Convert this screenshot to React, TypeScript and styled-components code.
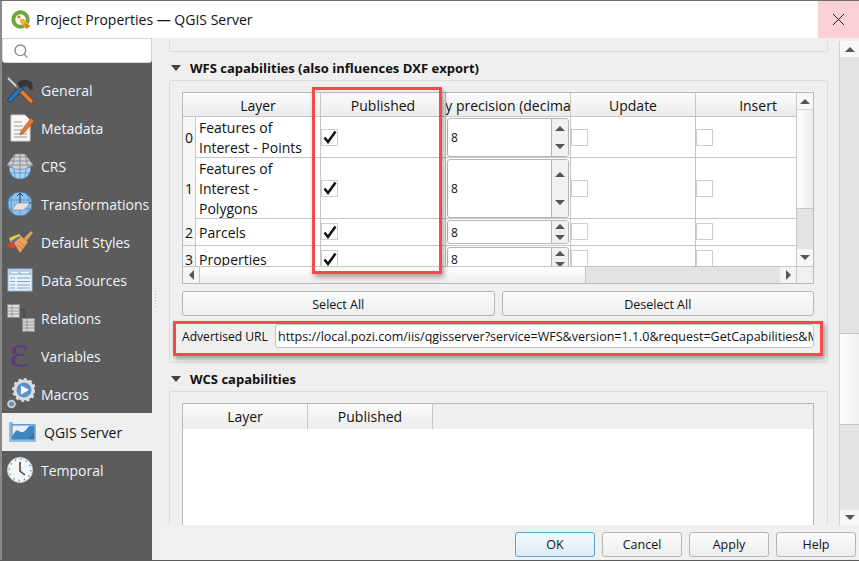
import React from 'react'
import styled, { createGlobalStyle } from 'styled-components'
import { Search } from 'lucide-react'

const GlobalStyle = createGlobalStyle`
  html, body {
    margin: 0;
    padding: 0;
    background: #efefef;
  }
  * {
    box-sizing: border-box;
  }
`

const Window = styled.div`
  position: relative;
  display: flex;
  flex-direction: column;
  width: 859px;
  height: 561px;
  overflow: hidden;
  padding-left: 2px;
  background: #efefef;
  border-top: 1px solid #6e6e6e;
  border-bottom: 1px solid #5c5c5c;
  font-family: 'Open Sans', 'Noto Sans', sans-serif;
  font-size: 14px;
  color: #111;
  &::before {
    content: '';
    position: absolute;
    left: 0;
    top: 0;
    bottom: 0;
    width: 2px;
    background: #8a8a8a;
  }
`

const TitleBar = styled.header`
  display: flex;
  align-items: center;
  flex: 0 0 37px;
  padding-left: 9px;
  background: #fff;
`

const TitleText = styled.span`
  margin-left: 5px;
  font-size: 14px;
  color: #111;
`

const CloseButton = styled.div`
  display: flex;
  align-items: center;
  justify-content: center;
  width: 41px;
  height: 37px;
  margin-left: auto;
  background: #fbd0d5;
`

const Body = styled.div`
  display: flex;
  flex: 1;
  min-height: 0;
`

const Sidebar = styled.nav`
  display: flex;
  flex-direction: column;
  flex: 0 0 150px;
  background: #5c5c5c;
`

const SearchBox = styled.div`
  display: flex;
  align-items: center;
  flex: 0 0 25px;
  margin-bottom: 8px;
  padding-left: 10px;
  background: #fff;
  border: 1px solid #d6d6d6;
  border-radius: 0 0 3px 3px;
`

const NavItem = styled.div<{ $active?: boolean }>`
  display: flex;
  align-items: center;
  gap: 8px;
  flex: 0 0 38px;
  padding-left: ${(p) => (p.$active ? '7px' : '5px')};
  background: ${(p) => (p.$active ? '#efefef' : 'transparent')};
  color: ${(p) => (p.$active ? '#111' : '#eef4fa')};
  font-size: 14px;
  white-space: nowrap;
`

const NavIcon = styled.span<{ $active?: boolean }>`
  display: flex;
  align-items: center;
  justify-content: flex-start;
  flex: 0 0 ${(p) => (p.$active ? '27px' : '26px')};
  min-width: 0;
  height: 32px;
  svg {
    flex: none;
  }
`

const Splitter = styled.div`
  display: flex;
  align-items: center;
  justify-content: center;
  flex: 0 0 6px;
`

const SplitterDots = styled.div`
  width: 1px;
  height: 16px;
  background: repeating-linear-gradient(to bottom, #b8b8b8 0 1px, transparent 1px 3px);
`

const RightColumn = styled.div`
  display: flex;
  flex-direction: column;
  flex: 1;
  min-width: 0;
`

const ScrollRow = styled.div`
  display: flex;
  flex: 1;
  min-height: 0;
`

const Content = styled.main`
  flex: 1;
  min-width: 0;
  overflow: hidden;
  padding: 3px 11px 0;
`

const StubGroup = styled.div`
  height: 11px;
  background: #eeeeee;
  border: 1px solid #dcdcdc;
  border-top: 0;
  border-radius: 0 0 2px 2px;
`

const SectionHeader = styled.div`
  display: flex;
  align-items: center;
  gap: 9px;
  height: 24px;
  margin-top: 4px;
  padding-left: 2px;
  font-size: 13px;
  font-weight: 700;
`

const Caret = styled.span`
  width: 0;
  height: 0;
  border-left: 5px solid transparent;
  border-right: 5px solid transparent;
  border-top: 6px solid #444;
`

const Group = styled.section<{ $height: number }>`
  height: ${(p) => p.$height}px;
  padding: 11px 13px 0 12px;
  border: 1px solid #dcdcdc;
  border-radius: 2px;
`

const TableFrame = styled.div`
  display: grid;
  grid-template-columns: 613px 17px;
  grid-template-rows: 173px 17px;
  width: 632px;
  height: 192px;
  background: #fff;
  border: 1px solid #b9b9b9;
`

const Viewport = styled.div`
  overflow: hidden;
`

const Row = styled.div<{ $height: number }>`
  display: grid;
  grid-template-columns: 13px 125px 125px 125px 125px 125px;
  height: ${(p) => p.$height}px;
  border-bottom: 1px solid #c6c6c6;
`

const HeaderCell = styled.div`
  display: flex;
  align-items: center;
  justify-content: center;
  padding-top: 2px;
  overflow: hidden;
  white-space: nowrap;
  font-size: 14px;
  background: linear-gradient(to bottom, #fbfbfb, #ececec);
  border-right: 1px solid #c6c6c6;
`

const WcsHeaderCell = styled(HeaderCell)`
  padding-top: 0;
`

const HeaderCorner = styled.div`
  background: linear-gradient(to bottom, #fbfbfb, #ececec);
`

const IndexCell = styled.div`
  display: flex;
  align-items: center;
  justify-content: center;
  font-size: 14px;
  background: #f6f6f6;
  border-right: 1px solid #c6c6c6;
`

const LayerCell = styled.div`
  display: flex;
  align-items: center;
  padding: 1px 3px 0;
  font-size: 14px;
  line-height: 20px;
  border-right: 1px solid #c6c6c6;
`

const CheckCell = styled.div`
  display: flex;
  align-items: center;
  padding-bottom: 1px;
  border-right: 1px solid #c6c6c6;
`

const CheckBox = styled.div`
  display: flex;
  align-items: center;
  justify-content: center;
  width: 17px;
  height: 17px;
  background: #fff;
  border: 1px solid #cdcdcd;
`

const SpinCell = styled.div`
  padding: 1px;
  border-right: 1px solid #c6c6c6;
`

const SpinBox = styled.div`
  display: flex;
  height: 100%;
  background: #fff;
  border: 1px solid #b4b4b4;
  border-radius: 3px;
  overflow: hidden;
`

const SpinValue = styled.div`
  display: flex;
  align-items: center;
  flex: 1;
  padding-left: 3px;
  font-size: 12px;
`

const SpinButtons = styled.div`
  display: flex;
  flex-direction: column;
  align-items: center;
  justify-content: space-around;
  flex: 0 0 17px;
  background: #f1f1f1;
  border-left: 1px solid #b4b4b4;
`

const Arrow = styled.span<{ $dir: 'up' | 'down' | 'left' | 'right' }>`
  width: 0;
  height: 0;
  ${(p) =>
    p.$dir === 'up'
      ? 'border-left: 5px solid transparent; border-right: 5px solid transparent; border-bottom: 5px solid #555;'
      : p.$dir === 'down'
        ? 'border-left: 5px solid transparent; border-right: 5px solid transparent; border-top: 5px solid #555;'
        : p.$dir === 'left'
          ? 'border-top: 5px solid transparent; border-bottom: 5px solid transparent; border-right: 5px solid #555;'
          : 'border-top: 5px solid transparent; border-bottom: 5px solid transparent; border-left: 5px solid #555;'}
`

const TableVScroll = styled.div`
  display: flex;
  flex-direction: column;
  background: #e3e3e3;
  border-left: 1px solid #c6c6c6;
`

const ScrollButton = styled.div<{ $size: number }>`
  display: flex;
  align-items: center;
  justify-content: center;
  flex: 0 0 ${(p) => p.$size}px;
  background: #f7f7f7;
`

const VThumb = styled.div<{ $height: number }>`
  flex: 0 0 ${(p) => p.$height}px;
  background: linear-gradient(to right, #fff, #ededed);
  border-top: 1px solid #d8d8d8;
  border-bottom: 1px solid #c6c6c6;
`

const Track = styled.div`
  flex: 1;
`

const TableHScroll = styled.div`
  display: flex;
  background: #e3e3e3;
  border-top: 1px solid #c6c6c6;
`

const HButton = styled.div`
  display: flex;
  align-items: center;
  justify-content: center;
  flex: 0 0 16px;
  background: #f4f4f4;
`

const HThumb = styled.div`
  flex: 0 0 387px;
  background: linear-gradient(to bottom, #fff, #ededed);
  border-left: 1px solid #c6c6c6;
  border-right: 1px solid #c6c6c6;
`

const Corner = styled.div`
  background: #f0f0f0;
  border-left: 1px solid #c6c6c6;
  border-top: 1px solid #c6c6c6;
`

const ButtonRow = styled.div`
  display: flex;
  gap: 7px;
  margin-top: 7px;
`

const PushButton = styled.div`
  display: flex;
  align-items: center;
  justify-content: center;
  flex: 1;
  height: 25px;
  padding-top: 1px;
  font-size: 12.5px;
  background: linear-gradient(to bottom, #fcfcfc, #eeeeee);
  border: 1px solid #b5b5b5;
  border-radius: 3px;
`

const UrlRow = styled.div`
  display: flex;
  align-items: center;
  height: 24px;
  margin-top: 8px;
`

const UrlLabel = styled.label`
  flex: 0 0 93px;
  font-size: 12.1px;
`

const UrlField = styled.div`
  display: flex;
  align-items: center;
  flex: 1;
  min-width: 0;
  height: 24px;
  padding-left: 2px;
  overflow: hidden;
  white-space: nowrap;
  font-size: 12.5px;
  background: #fff;
  border: 1px solid #c4c4c4;
  border-radius: 3px;
`

const WcsFrame = styled.div`
  width: 632px;
  height: 200px;
  background: #fff;
  border: 1px solid #b9b9b9;
`

const WcsHeader = styled.div`
  display: grid;
  grid-template-columns: 125px 125px;
  height: 25px;
  background: #efefef;
`

const MainScrollbar = styled.div`
  display: flex;
  flex-direction: column;
  flex: 0 0 20px;
  margin-top: 3px;
  background: #e3e3e3;
  border-left: 1px solid #d0d0d0;
`

const MainThumb = styled.div`
  flex: 0 0 92px;
  margin-top: 276px;
  background: linear-gradient(to right, #fff, #f0f0f0);
  border-top: 1px solid #c6c6c6;
  border-bottom: 1px solid #c6c6c6;
`

const Footer = styled.footer`
  display: flex;
  justify-content: flex-end;
  gap: 7px;
  flex: 0 0 35px;
  padding: 7px 3px 0 0;
  background: #f0f0f0;
`

const DialogButton = styled.div<{ $primary?: boolean }>`
  display: flex;
  align-items: center;
  justify-content: center;
  width: 80px;
  height: 25px;
  font-size: 12.5px;
  background: ${(p) =>
    p.$primary ? 'linear-gradient(to bottom, #f4fafe, #dcebf6)' : 'linear-gradient(to bottom, #fbfbfb, #eeeeee)'};
  border: 1px solid ${(p) => (p.$primary ? '#58a2d6' : '#b5b5b5')};
  border-radius: 3px;
`

const Highlight = styled.div`
  position: absolute;
  border: 3px solid #f44a4a;
  box-shadow: 2px 3px 5px rgba(0, 0, 0, 0.35);
  pointer-events: none;
`

const PublishedHighlight = styled(Highlight)`
  left: 312px;
  top: 86px;
  width: 130px;
  height: 187px;
`

const UrlHighlight = styled(Highlight)`
  left: 173px;
  top: 320px;
  width: 650px;
  height: 35px;
`

const ToolIcon = () => (
  <svg width="26" height="26" viewBox="0 0 26 26">
    <path d="M1 1 L12 12" stroke="#cfd4d8" strokeWidth="2" />
    <path d="M11 11 L24 24" stroke="#7a3d12" strokeWidth="5" strokeLinecap="round" />
    <path d="M11 11 L24 24" stroke="#ea7d2c" strokeWidth="3.4" strokeLinecap="round" />
    <path d="M3 23 L15 10" stroke="#173f6b" strokeWidth="5" strokeLinecap="round" />
    <path d="M3 23 L15 10" stroke="#2f77bd" strokeWidth="3.4" strokeLinecap="round" />
    <path d="M10 6 Q16 0 25 5 L26 12 L23 13 Q20 7 16 10 L14 12 Z" fill="#34383c" />
  </svg>
)

const DocIcon = () => (
  <svg width="26" height="28" viewBox="0 0 26 28">
    <path d="M4 1 H18 L23 6 V27 H4 Z" fill="#f7f7f7" stroke="#cfcfcf" />
    <path d="M7 8 H15 M7 12 H16 M7 16 H18 M7 20 H20 M7 23 H20" stroke="#9b9b9b" strokeWidth="1.2" />
    <path d="M14 17 L24 4 L27 7 L17 19 L13 21 Z" fill="#e8792b" stroke="#a85417" strokeWidth="0.6" />
  </svg>
)

const CrsIcon = () => (
  <svg width="26" height="28" viewBox="0 0 26 28">
    <path d="M2 15 Q13 19 24 15 Q23 27 13 27 Q3 27 2 15 Z" fill="#a9d4f4" stroke="#4c8cc4" strokeWidth="0.8" />
    <path d="M0 13 L8 2 H18 L26 13 L18 17 H8 Z" fill="#cfd1d3" stroke="#8c8c8c" strokeWidth="0.6" />
    <path d="M13 2 V17 M8 2 L5 15 M18 2 L21 15 M3 9 H23 M6 5 H20 M1 13 H25" stroke="#7f8285" strokeWidth="0.8" fill="none" />
    <path d="M13 17 V27 M7 17 Q7 23 9 26 M19 17 Q19 23 17 26 M4 21 H22" stroke="#4f92c9" strokeWidth="0.8" fill="none" />
  </svg>
)

const TransformIcon = () => (
  <svg width="26" height="26" viewBox="0 0 26 26">
    <circle cx="13" cy="13" r="12" fill="#8fc2ea" stroke="#3f84bf" />
    <path d="M13 1 V25 M6 3 Q2 13 6 23 M20 3 Q24 13 20 23 M1 9 H25 M1 18 H25" stroke="#4f92c9" strokeWidth="0.8" fill="none" />
    <path d="M5 19 L10 12 H23 L17 19 Z" fill="#e4e4e4" stroke="#7f7f7f" strokeWidth="0.6" />
    <path d="M13 12 V3 M10 5 L13 2 L16 5 M22 12 L26 12" stroke="#444" strokeWidth="1" fill="none" />
  </svg>
)

const BrushIcon = () => (
  <svg width="26" height="24" viewBox="0 0 26 24">
    <path d="M15 10 L24 1 L26 3 L18 13 Z" fill="#d6a25c" stroke="#a1723a" strokeWidth="0.5" />
    <path d="M2 8 L12 4 L15 7 L4 13 Z" fill="#e8cf3a" />
    <path d="M4 11 L12 6 L14 9 L6 14 Z" fill="#3c7cc0" />
    <path d="M0 15 L7 11 L11 16 L4 19 Z" fill="#d9402f" />
    <path d="M7 13 L14 6 L21 12 L13 23 Z" fill="#e8a262" stroke="#b96f33" strokeWidth="0.6" />
    <path d="M10 14 L15 19 M12 11 L17 16" stroke="#b96f33" strokeWidth="0.7" />
  </svg>
)

const SourcesIcon = () => (
  <svg width="26" height="24" viewBox="0 0 26 24">
    <rect x="1" y="1" width="24" height="22" fill="#e9f1f9" stroke="#8db2d4" />
    <rect x="2" y="2" width="22" height="5" fill="#a9c9e6" />
    <path d="M4 4.5 H11 M14 4.5 H22" stroke="#f4f9fd" strokeWidth="1.4" />
    <path d="M3 10 H8 M10 10 H23 M3 13.5 H8 M10 13.5 H23 M3 17 H8 M10 17 H23 M3 20 H8 M10 20 H23" stroke="#7ba6cd" strokeWidth="1.2" />
  </svg>
)

const RelationsIcon = () => (
  <svg width="28" height="28" viewBox="0 0 28 28">
    <path d="M12 6 H17 V14" stroke="#3b4a5c" strokeWidth="1.4" fill="none" />
    <rect x="0.5" y="0.5" width="12" height="13" fill="#dcdcdc" stroke="#8e8e8e" />
    <path d="M1 4 H12 M1 7 H12 M1 10 H12 M5 1 V13" stroke="#8e8e8e" strokeWidth="0.8" />
    <rect x="15.5" y="14.5" width="12" height="13" fill="#d4d4d4" stroke="#8e8e8e" />
    <path d="M16 18 H27 M16 21 H27 M16 24 H27 M20 15 V27" stroke="#8e8e8e" strokeWidth="0.8" />
  </svg>
)

const VariablesIcon = () => (
  <svg width="26" height="28" viewBox="0 0 26 28">
    <text x="12" y="25" textAnchor="middle" fontFamily="'Liberation Serif', serif" fontSize="46" fill="#5c3a7e">
      ε
    </text>
  </svg>
)

const MacrosIcon = () => (
  <svg width="28" height="32" viewBox="0 0 28 32">
    <circle cx="17" cy="12" r="9" fill="#5c93cc" stroke="#dcdcdc" strokeWidth="3" />
    <circle cx="17" cy="12" r="10.8" fill="none" stroke="#d8d8d8" strokeWidth="2.4" strokeDasharray="3 2.6" />
    <path d="M14 7.5 L22 12 L14 16.5 Z" fill="#fff" />
    <circle cx="4.5" cy="26" r="3.4" fill="#5c93cc" stroke="#cfcfcf" strokeWidth="1.8" />
  </svg>
)

const ServerIcon = () => (
  <svg width="27" height="20" viewBox="0 0 27 20">
    <path d="M0 0 H4 V2 H27 V20 H0 Z" fill="#8fbce3" />
    <rect x="3" y="3" width="22" height="14" fill="#e8f1f9" stroke="#2f74b2" strokeWidth="0.8" />
    <path d="M3 15 Q7 6 10 9 T17 8 L20 4 H25 V12 L19 17 H3 Z" fill="#3f86c6" />
    <path d="M19 17 L25 11 V17 Z" fill="#5a6672" />
  </svg>
)

const ClockIcon = () => (
  <svg width="26" height="26" viewBox="0 0 26 26">
    <circle cx="13" cy="13" r="12.5" fill="#f5f6f7" stroke="#cfd3d6" />
    <circle cx="13" cy="13" r="10.7" fill="none" stroke="#6b9bcb" strokeWidth="1.6" strokeDasharray="1.4 4.2" />
    <path d="M13 5 V14 L18 18" stroke="#4a4a4a" strokeWidth="1.6" fill="none" />
  </svg>
)

const QgisLogo = () => (
  <svg width="20" height="20" viewBox="0 0 20 20">
    <circle cx="9.5" cy="9.5" r="7.2" fill="none" stroke="#6fa63f" strokeWidth="4" />
    <path d="M9 9 L13 9 L19 16 L15.5 19 L9 12 Z" fill="#f2b134" />
    <path d="M13 13 L19 16 L15.5 19 Z" fill="#d9762b" />
    <circle cx="8" cy="7" r="1.6" fill="#d9762b" />
  </svg>
)

const Tick = () => (
  <svg width="14" height="14" viewBox="0 0 14 14">
    <path d="M1.5 7.5 L5 12 L12.5 1.5" stroke="#111" strokeWidth="2.5" fill="none" />
  </svg>
)

const navItems = [
  { label: 'General', icon: <ToolIcon /> },
  { label: 'Metadata', icon: <DocIcon /> },
  { label: 'CRS', icon: <CrsIcon /> },
  { label: 'Transformations', icon: <TransformIcon /> },
  { label: 'Default Styles', icon: <BrushIcon /> },
  { label: 'Data Sources', icon: <SourcesIcon /> },
  { label: 'Relations', icon: <RelationsIcon /> },
  { label: 'Variables', icon: <VariablesIcon /> },
  { label: 'Macros', icon: <MacrosIcon /> },
  { label: 'QGIS Server', icon: <ServerIcon />, active: true },
  { label: 'Temporal', icon: <ClockIcon /> },
]

const layers = [
  { name: 'Features of Interest - Points', height: 41 },
  { name: 'Features of Interest - Polygons', height: 61 },
  { name: 'Parcels', height: 27 },
  { name: 'Properties', height: 27 },
]

const App = () => {
  return (
    <Window>
      <GlobalStyle />
      <TitleBar>
        <QgisLogo />
        <TitleText>Project Properties — QGIS Server</TitleText>
        <CloseButton>
          <svg width="13" height="13" viewBox="0 0 13 13">
            <path d="M1 1 L12 12 M12 1 L1 12" stroke="#222" strokeWidth="1" />
          </svg>
        </CloseButton>
      </TitleBar>
      <Body>
        <Sidebar>
          <SearchBox>
            <Search size={16} color="#8a8a8a" />
          </SearchBox>
          {navItems.map((item) => (
            <NavItem key={item.label} $active={item.active}>
              <NavIcon $active={item.active}>{item.icon}</NavIcon>
              {item.label}
            </NavItem>
          ))}
        </Sidebar>
        <Splitter>
          <SplitterDots />
        </Splitter>
        <RightColumn>
          <ScrollRow>
            <Content>
              <StubGroup />
              <SectionHeader>
                <Caret />
                WFS capabilities (also influences DXF export)
              </SectionHeader>
              <Group $height={283}>
                <TableFrame>
                  <Viewport>
                    <Row $height={24}>
                      <HeaderCorner />
                      <HeaderCell>Layer</HeaderCell>
                      <HeaderCell>Published</HeaderCell>
                      <HeaderCell>y precision (decima</HeaderCell>
                      <HeaderCell>Update</HeaderCell>
                      <HeaderCell>Insert</HeaderCell>
                    </Row>
                    {layers.map((layer, index) => (
                      <Row key={layer.name} $height={layer.height}>
                        <IndexCell>{index}</IndexCell>
                        <LayerCell>{layer.name}</LayerCell>
                        <CheckCell>
                          <CheckBox>
                            <Tick />
                          </CheckBox>
                        </CheckCell>
                        <SpinCell>
                          <SpinBox>
                            <SpinValue>8</SpinValue>
                            <SpinButtons>
                              <Arrow $dir="up" />
                              <Arrow $dir="down" />
                            </SpinButtons>
                          </SpinBox>
                        </SpinCell>
                        <CheckCell>
                          <CheckBox />
                        </CheckCell>
                        <CheckCell>
                          <CheckBox />
                        </CheckCell>
                      </Row>
                    ))}
                  </Viewport>
                  <TableVScroll>
                    <ScrollButton $size={16}>
                      <Arrow $dir="up" />
                    </ScrollButton>
                    <VThumb $height={100} />
                    <Track />
                    <ScrollButton $size={17}>
                      <Arrow $dir="down" />
                    </ScrollButton>
                  </TableVScroll>
                  <TableHScroll>
                    <HButton>
                      <Arrow $dir="left" />
                    </HButton>
                    <HThumb />
                    <Track />
                    <HButton>
                      <Arrow $dir="right" />
                    </HButton>
                  </TableHScroll>
                  <Corner />
                </TableFrame>
                <ButtonRow>
                  <PushButton>Select All</PushButton>
                  <PushButton>Deselect All</PushButton>
                </ButtonRow>
                <UrlRow>
                  <UrlLabel>Advertised URL</UrlLabel>
                  <UrlField>https://local.pozi.com/iis/qgisserver?service=WFS&amp;version=1.1.0&amp;request=GetCapabilities&amp;MAP</UrlField>
                </UrlRow>
              </Group>
              <SectionHeader>
                <Caret />
                WCS capabilities
              </SectionHeader>
              <Group $height={200}>
                <WcsFrame>
                  <WcsHeader>
                    <WcsHeaderCell>Layer</WcsHeaderCell>
                    <WcsHeaderCell>Published</WcsHeaderCell>
                  </WcsHeader>
                </WcsFrame>
              </Group>
            </Content>
            <MainScrollbar>
              <ScrollButton $size={16}>
                <Arrow $dir="up" />
              </ScrollButton>
              <MainThumb />
              <Track />
              <ScrollButton $size={15}>
                <Arrow $dir="down" />
              </ScrollButton>
            </MainScrollbar>
          </ScrollRow>
          <Footer>
            <DialogButton $primary>OK</DialogButton>
            <DialogButton>Cancel</DialogButton>
            <DialogButton>Apply</DialogButton>
            <DialogButton>Help</DialogButton>
          </Footer>
        </RightColumn>
      </Body>
      <PublishedHighlight />
      <UrlHighlight />
    </Window>
  )
}

export default App
